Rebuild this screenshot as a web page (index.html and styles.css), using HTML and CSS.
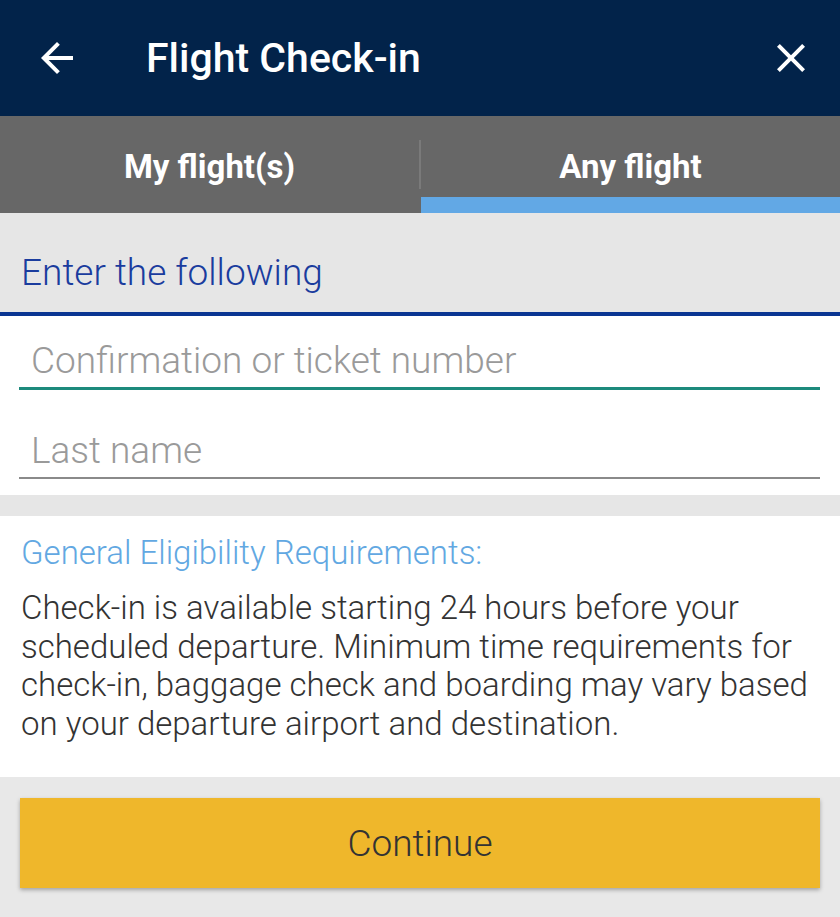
FILE: index.html
```html
<!DOCTYPE html>
<html>
<head>
    <meta charset="utf-8">
    <meta name="viewport" content="width=device-width, initial-scale=1.0">
    <title>Flight Check-in</title>
    <link rel="stylesheet" href="styles.css">
</head>
<body>
    <!--header-->
    <div class="topBar">
        <svg class="icon" viewBox="0 0 24 24"><path d="M20 11H7.83l5.59-5.59L12 4l-8 8 8 8 1.41-1.41L7.83 13H20v-2z"/></svg>
        <span class="title">Flight Check-in</span>
        <svg class="icon closeIcon" viewBox="0 0 24 24"><path d="M19 6.41L17.59 5 12 10.59 6.41 5 5 6.41 10.59 12 5 17.59 6.41 19 12 13.41 17.59 19 19 17.59 13.41 12z"/></svg>
    </div>
    <!--tabs-->
    <div class="tabs">
        <div class="tab">My flight(s)</div>
        <div class="tabDivider"></div>
        <div class="tab active">Any flight</div>
    </div>
    <!--form-->
    <div class="sectionHead">Enter the following</div>
    <div class="form">
        <input class="field focused" type="text" placeholder="Confirmation or ticket number">
        <input class="field" type="text" placeholder="Last name">
    </div>
    <div class="gap"></div>
    <!--info-->
    <div class="card">
        <p class="cardTitle">General Eligibility Requirements:</p>
        <p class="cardText">Check-in is available starting 24 hours before your scheduled departure. Minimum time requirements for check-in, baggage check and boarding may vary based on your departure airport and destination.</p>
    </div>
    <div class="footer">
        <button class="continueBtn">Continue</button>
    </div>
</body>
</html>
```
FILE: styles.css
```css
body {
    margin: 0;
    width: 840px;
    height: 917px;
    overflow: hidden;
    background-color: #e6e6e6;
    font-family: Roboto, "Noto Sans", sans-serif;
}
.topBar {
    height: 116px;
    background-color: #02234a;
    display: flex;
    align-items: center;
    padding: 0 25px 0 33px;
    box-sizing: border-box;
}
.icon {
    width: 48px;
    height: 48px;
    fill: #ffffff;
    flex-shrink: 0;
}
.closeIcon {
    margin-left: auto;
}
.title {
    color: #ffffff;
    font-size: 41px;
    font-weight: 500;
    margin-left: 65px;
}
.tabs {
    height: 97px;
    background-color: #676767;
    display: flex;
}
.tab {
    flex: 1;
    box-sizing: border-box;
    padding-top: 20px;
    border-bottom: 16px solid #676767;
    display: flex;
    align-items: center;
    justify-content: center;
    color: #ffffff;
    font-size: 33px;
    font-weight: 700;
}
.tab.active {
    border-bottom-color: #62a8e5;
}
.tabDivider {
    width: 2px;
    height: 49px;
    margin-top: 24px;
    background-color: #7a7a7a;
}
.sectionHead {
    height: 103px;
    box-sizing: border-box;
    padding: 20px 0 0 21px;
    display: flex;
    align-items: center;
    background-color: #e6e6e6;
    border-bottom: 4px solid #0a3592;
    color: #1a3c9e;
    font-size: 37px;
    font-weight: 300;
}
.form {
    background-color: #ffffff;
    padding: 12px 20px 16px 19px;
    display: flex;
    flex-direction: column;
    gap: 27px;
}
.field {
    height: 62px;
    box-sizing: border-box;
    border: none;
    border-bottom: 2px solid #8a8a8a;
    padding: 6px 0 0 12px;
    outline: none;
    font-family: Roboto, "Noto Sans", sans-serif;
    font-size: 37px;
    font-weight: 300;
    color: #333333;
    background: transparent;
}
.field::placeholder {
    color: #9a9a9a;
}
.field.focused {
    border-bottom: 3px solid #1d8a7c;
}
.gap {
    height: 21px;
}
.card {
    height: 261px;
    box-sizing: border-box;
    background-color: #ffffff;
    padding: 17px 20px 0 21px;
}
.cardTitle {
    margin: 0;
    color: #62a8e2;
    font-size: 33px;
    font-weight: 300;
    line-height: 39px;
}
.cardText {
    margin: 17px 0 0 0;
    color: #333333;
    font-size: 33px;
    font-weight: 300;
    line-height: 38.5px;
}
.footer {
    height: 141px;
    box-sizing: border-box;
    padding: 21px 20px 0 20px;
    background-color: #e8e8e8;
}
.continueBtn {
    width: 100%;
    height: 90px;
    border: none;
    border-radius: 0;
    background-color: #efb72b;
    box-shadow: 0 2px 4px rgba(0, 0, 0, 0.3);
    color: #333333;
    font-family: Roboto, "Noto Sans", sans-serif;
    font-size: 37px;
    font-weight: 300;
}
```
